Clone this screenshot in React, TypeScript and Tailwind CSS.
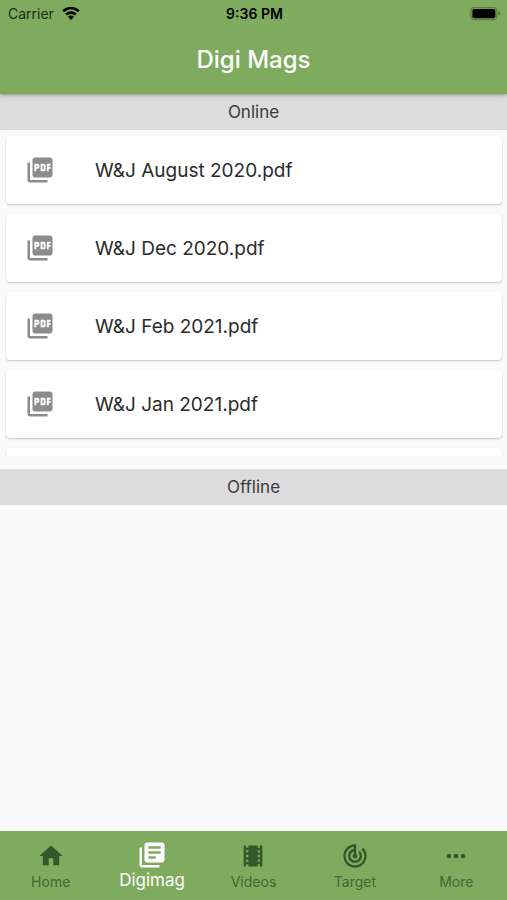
import React, { useState } from 'react';
import type { IconType } from 'react-icons';
import {
  MdHome,
  MdLibraryBooks,
  MdMoreHoriz,
  MdPictureAsPdf,
  MdTheaters,
  MdTrackChanges,
} from 'react-icons/md';

interface Tab {
  label: string;
  icon: IconType;
}

const tabs: Tab[] = [
  { label: 'Home', icon: MdHome },
  { label: 'Digimag', icon: MdLibraryBooks },
  { label: 'Videos', icon: MdTheaters },
  { label: 'Target', icon: MdTrackChanges },
  { label: 'More', icon: MdMoreHoriz },
];

const onlineMags = [
  'W&J August 2020.pdf',
  'W&J Dec 2020.pdf',
  'W&J Feb 2021.pdf',
  'W&J Jan 2021.pdf',
];

const StatusBar: React.FC = () => (
  <div className="grid h-7 grid-cols-3 items-center pl-2 pr-1.5 text-sm text-black">
    <div className="flex items-center gap-2">
      <span className="text-[#1c2a14]">Carrier</span>
      <svg width="18" height="14" viewBox="0 0 18 14" fill="none" aria-hidden="true">
        <path d="M1.2 4.2a11.2 11.2 0 0 1 15.6 0" stroke="currentColor" strokeWidth="2.6" />
        <path d="M4.2 7.6a6.9 6.9 0 0 1 9.6 0" stroke="currentColor" strokeWidth="2.6" />
        <path d="M9 13l-3-3.200a4.200 4.200 0 0 1 6 0z" fill="currentColor" />
      </svg>
    </div>
    <span className="text-center font-semibold">9:36 PM</span>
    <svg className="justify-self-end" width="31" height="14" viewBox="0 0 31 14" aria-hidden="true">
      <rect x="0.9" y="0.6" width="26" height="12" rx="3.4" fill="none" stroke="#587a41" strokeWidth="1.2" />
      <rect x="2.4" y="2" width="23" height="9.2" rx="1.8" fill="#000" />
      <path d="M28.4 4.4c1.3.4 2 1.2 2 2.2s-.7 1.8-2 2.2z" fill="#587a41" />
    </svg>
  </div>
);

const SectionTitle: React.FC<{ children: React.ReactNode }> = ({ children }) => (
  <h2 className="h-9 shrink-0 bg-[#dcdcdc] text-center text-[17px] leading-9 text-[#3a3a3a]">
    {children}
  </h2>
);

const MagList: React.FC<{ children?: React.ReactNode }> = ({ children }) => (
  <ul className="flex min-h-0 flex-1 basis-0 flex-col gap-2.5 overflow-hidden pt-1.5 pr-[5px] pl-1.5">
    {children}
  </ul>
);

const MagCard: React.FC<{ name?: string }> = ({ name }) => (
  <li>
    <button
      type="button"
      className="flex h-[68px] w-full items-center gap-10 rounded bg-white pl-[19px] text-left text-[19px] text-[#2b2b2b] shadow-[0_1px_2px_rgba(0,0,0,0.22)]"
    >
      {name && (
        <>
          <MdPictureAsPdf size={30} className="shrink-0 text-[#8c8c8c]" />
          <span className="pt-0.5">{name}</span>
        </>
      )}
    </button>
  </li>
);

const App: React.FC = () => {
  const [active, setActive] = useState('Digimag');

  return (
    <div className="flex h-screen flex-col bg-[#fafafa] font-['Inter',sans-serif]">
      <header className="relative shrink-0 bg-[#7fab5f] shadow-[0_1px_4px_rgba(0,0,0,0.35)]">
        <StatusBar />
        <h1 className="h-[66px] text-center text-2xl leading-[64px] font-medium text-white">
          Digi Mags
        </h1>
      </header>

      <main className="flex min-h-0 flex-1 flex-col">
        <SectionTitle>Online</SectionTitle>
        <MagList>
          {onlineMags.map((name) => (
            <MagCard key={name} name={name} />
          ))}
          {/* next row, still loading */}
          <MagCard />
        </MagList>
        <div className="mt-[13px] shrink-0">
          <SectionTitle>Offline</SectionTitle>
        </div>
        <MagList />
      </main>

      <nav className="grid h-[69px] shrink-0 grid-cols-5 bg-[#7fab5f]">
        {tabs.map(({ label, icon: Icon }) => (
          <button
            key={label}
            type="button"
            onClick={() => setActive(label)}
            className={
              label === active
                ? 'flex flex-col items-center pt-[9px] text-[17px] leading-5 text-white'
                : 'flex flex-col items-center pt-[11px] text-sm leading-5 text-[#41682f]'
            }
          >
            <Icon
              size={label === active ? 30 : 28}
              className={label === active ? 'text-white' : 'text-[#34562a]'}
            />
            <span className={label === active ? '' : 'pt-0.5'}>{label}</span>
          </button>
        ))}
      </nav>
    </div>
  );
};

export default App;
